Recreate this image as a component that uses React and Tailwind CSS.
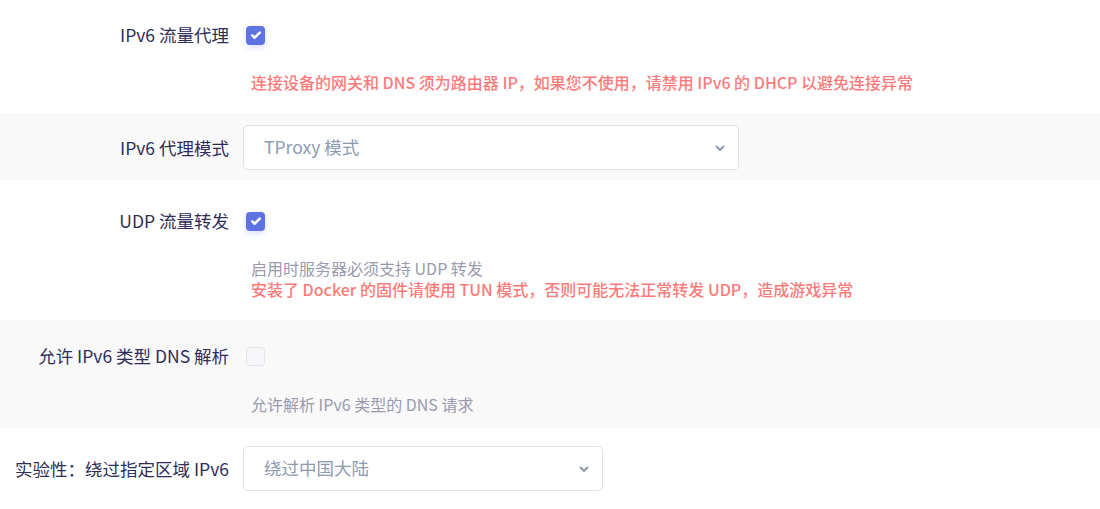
import React from 'react';

const font = { fontFamily: '"Noto Sans CJK SC", "Noto Sans", sans-serif' };

const Check = ({ checked }) =>
    checked ? (
        <span className="flex h-[19px] w-[19px] items-center justify-center rounded-[4px] bg-[#5e72e4] shadow-[0_2px_6px_rgba(94,114,228,0.25)]">
            <svg viewBox="0 0 12 12" className="h-[12px] w-[12px]" fill="none" stroke="white" strokeWidth="2.6" strokeLinecap="round" strokeLinejoin="round">
                <path d="M2.3 6.4l2.4 2.3 5-5" />
            </svg>
        </span>
    ) : (
        <span className="block h-[19px] w-[19px] rounded-[4px] border border-[#e3e5ea] bg-[#f7f7f9]" />
    );

const Select = ({ value, width }) => (
    <div className={`flex h-[45px] items-center justify-between rounded-[5px] border border-[#dee2e6] bg-white pl-5 pr-3 ${width}`}>
        <span className="text-[17.5px] text-[#8d9ab0]">{value}</span>
        <svg viewBox="0 0 12 12" className="h-3 w-3" fill="none" stroke="#8898aa" strokeWidth="1.8" strokeLinecap="round" strokeLinejoin="round">
            <path d="M2.5 4.5L6 8l3.5-3.5" />
        </svg>
    </div>
);

const Label = ({ children, tall }) => (
    <div className={`w-[229px] shrink-0 text-right text-[17.5px] text-[#2e2e58] ${tall ? 'leading-[45px]' : 'leading-6'}`}>{children}</div>
);

export default function App() {
    return (
        <div className="w-[1100px] h-[509px] overflow-hidden bg-white" style={font}>
            {/* IPv6 流量代理 */}
            <div className="bg-white pt-[23px] pb-5">
                <div className="flex gap-[14px]">
                    <Label>IPv6 流量代理</Label>
                    <div className="flex h-6 items-center pl-[3px]">
                        <Check checked />
                    </div>
                </div>
                <p className="ml-[251px] mt-[25px] text-base font-medium leading-[21px] text-[#fb7b7b]">
                    连接设备的网关和 DNS 须为路由器 IP，如果您不使用，请禁用 IPv6 的 DHCP 以避免连接异常
                </p>
            </div>

            {/* IPv6 代理模式 */}
            <div className="bg-[#f9f9f9] pt-3 pb-[10px]">
                <div className="flex gap-[14px]">
                    <Label tall>IPv6 代理模式</Label>
                    <Select value="TProxy 模式" width="w-[496px]" />
                </div>
            </div>

            {/* UDP 流量转发 */}
            <div className="bg-white pt-[29px] pb-5">
                <div className="flex gap-[14px]">
                    <Label>UDP 流量转发</Label>
                    <div className="flex h-6 items-center pl-[3px]">
                        <Check checked />
                    </div>
                </div>
                <div className="ml-[251px] mt-[25px] text-base leading-[21px]">
                    <p className="text-[#9a9aae]">启用时服务器必须支持 UDP 转发</p>
                    <p className="font-medium text-[#fb7b7b]">安装了 Docker 的固件请使用 TUN 模式，否则可能无法正常转发 UDP，造成游戏异常</p>
                </div>
            </div>

            {/* 允许 IPv6 类型 DNS 解析 */}
            <div className="bg-[#f9f9f9] pt-6 pb-[13px]">
                <div className="flex gap-[14px]">
                    <Label>允许 IPv6 类型 DNS 解析</Label>
                    <div className="flex h-6 items-center pl-[3px]">
                        <Check />
                    </div>
                </div>
                <p className="ml-[251px] mt-[26px] text-base leading-[21px] text-[#9a9aae]">允许解析 IPv6 类型的 DNS 请求</p>
            </div>

            {/* 绕过指定区域 IPv6 */}
            <div className="bg-white pt-[18px]">
                <div className="flex gap-[14px]">
                    <Label tall>实验性：绕过指定区域 IPv6</Label>
                    <Select value="绕过中国大陆" width="w-[360px]" />
                </div>
            </div>
        </div>
    );
}
